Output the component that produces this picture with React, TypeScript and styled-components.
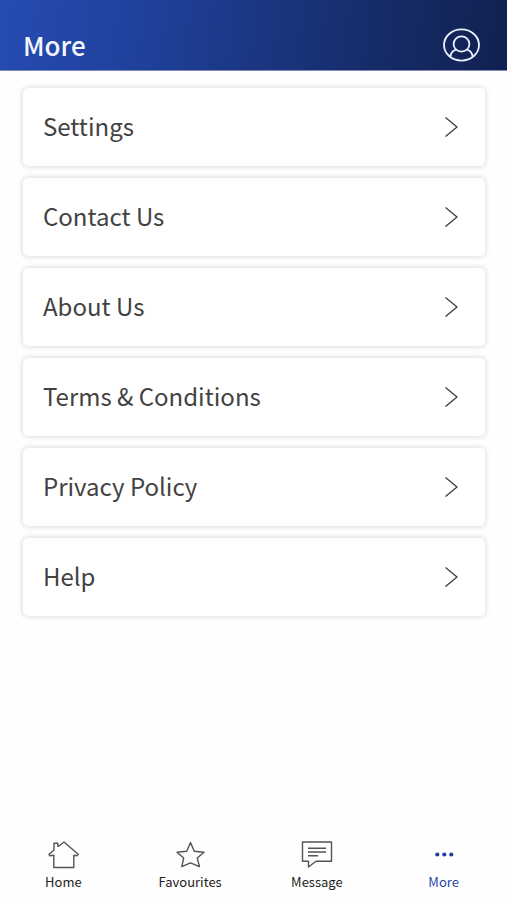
import React from "react";
import styled, { createGlobalStyle } from "styled-components";

const GlobalStyle = createGlobalStyle`
  *, *::before, *::after { box-sizing: border-box; }
  body {
    margin: 0;
    background: #fefefe;
    color: #424242;
    font-family: "Noto Sans CJK SC", "Noto Sans", sans-serif;
  }
  button { font: inherit; color: inherit; }
`;

const Screen = styled.div`
  display: flex;
  flex-direction: column;
  min-height: 100vh;
`;

const Header = styled.header`
  display: flex;
  align-items: center;
  justify-content: space-between;
  padding: 28px 27px 8px 23px;
  border-bottom: 1px solid #8388b4;
  background: linear-gradient(98deg, #264bb2 0%, #1f429e 26%, #1b3783 50%, #162d6b 72%, #122355 94%, #112050 100%);
`;

const Title = styled.h1`
  margin: 0;
  color: #f4f7ff;
  font-size: 26px;
  font-weight: 500;
  line-height: 32px;
`;

const ProfileButton = styled.button`
  display: flex;
  padding: 0;
  border: 0;
  background: none;
  color: #e9efff;
  cursor: pointer;
`;

const Menu = styled.ul`
  display: flex;
  flex-direction: column;
  gap: 12px;
  margin: 0;
  padding: 17px 22px 24px 23px;
  list-style: none;
`;

const MenuLink = styled.a`
  display: flex;
  align-items: center;
  justify-content: space-between;
  padding: 20px 27px 22px 20px;
  border-radius: 5px;
  background: #fff;
  box-shadow: 0 0 5px 1px rgba(0, 0, 0, 0.13);
  color: inherit;
  font-size: 24px;
  line-height: 36px;
  text-decoration: none;
`;

const TabBar = styled.nav`
  display: grid;
  grid-template-columns: repeat(4, 1fr);
  margin-top: auto;
  padding: 0 0 9px;
`;

const Tab = styled.a<{ $active?: boolean }>`
  display: flex;
  flex-direction: column;
  align-items: center;
  gap: 3px;
  color: ${(p) => (p.$active ? "#2846a8" : "#222")};
  font-size: 13px;
  line-height: 18px;
  text-decoration: none;
`;

const Icon = styled.svg`
  display: block;
  flex: none;
  fill: none;
  stroke: currentColor;
  stroke-linejoin: round;
`;

const ProfileIcon = () => (
  <Icon width="37" height="34" viewBox="0 0 37 34" strokeWidth="1.8" aria-hidden="true">
    <ellipse cx="18.5" cy="17" rx="17.5" ry="15.6" />
    <ellipse cx="18.5" cy="16" rx="7.9" ry="7.6" />
    <path d="M7.3 28.8C7.8 25.6 9.8 22.4 13.3 21.7M29.7 28.8C29.2 25.6 27.2 22.4 23.7 21.7" />
  </Icon>
);

const Chevron = () => (
  <Icon width="14" height="22" viewBox="0 0 14 22" strokeWidth="1.4" aria-hidden="true">
    <path d="M1.5 2.5L13 12L1.5 21.5" />
  </Icon>
);

const TabIcon = styled(Icon)`
  color: #505558;
  stroke-width: 1.4px;
`;

const HomeIcon = () => (
  <TabIcon width="32" height="30" viewBox="0 0 32 30" aria-hidden="true">
    <path d="M17 2L31.2 14.2L30.2 15.7L26.8 15.3V27.5H6.8V15.3L2.6 15.7L2.1 14.2L7 10V3.2H10.8V6.3L12.3 5.7Z" />
  </TabIcon>
);

const StarIcon = () => (
  <TabIcon width="30" height="30" viewBox="0 0 30 30" aria-hidden="true">
    <path d="M15.5 2.6L19.3 11.2L29 12.2L22.3 18L24.4 26.6L15.5 22.8L6.8 26.6L8.7 18L2 12.2L11.7 11.2Z" />
  </TabIcon>
);

const MessageIcon = () => (
  <TabIcon width="32" height="30" viewBox="0 0 32 30" aria-hidden="true">
    <path d="M1.5 2H30.5V21.2H15L7.5 27V21.2H1.5Z" />
    <path d="M7 8.2H25M7 12H25M7 15.7H17" />
  </TabIcon>
);

const MoreIcon = () => (
  <Icon width="20" height="30" viewBox="0 0 20 30" aria-hidden="true">
    <g fill="#1f3fa5" stroke="none">
      <circle cx="3.3" cy="14.5" r="2.1" />
      <circle cx="10.3" cy="14.5" r="2.1" />
      <circle cx="17.3" cy="14.5" r="2.1" />
    </g>
  </Icon>
);

const menuItems = ["Settings", "Contact Us", "About Us", "Terms & Conditions", "Privacy Policy", "Help"];

const tabs = [
  { label: "Home", Glyph: HomeIcon },
  { label: "Favourites", Glyph: StarIcon },
  { label: "Message", Glyph: MessageIcon },
  { label: "More", Glyph: MoreIcon, active: true },
];

export default function App() {
  return (
    <>
      <GlobalStyle />
      <Screen>
        <Header>
          <Title>More</Title>
          <ProfileButton type="button" aria-label="Profile">
            <ProfileIcon />
          </ProfileButton>
        </Header>
        <main>
          <Menu>
            {menuItems.map((label) => (
              <li key={label}>
                <MenuLink href="#">
                  {label}
                  <Chevron />
                </MenuLink>
              </li>
            ))}
          </Menu>
        </main>
        <TabBar aria-label="Main">
          {tabs.map(({ label, Glyph, active }) => (
            <Tab key={label} href="#" $active={active} aria-current={active ? "page" : undefined}>
              <Glyph />
              {label}
            </Tab>
          ))}
        </TabBar>
      </Screen>
    </>
  );
}
